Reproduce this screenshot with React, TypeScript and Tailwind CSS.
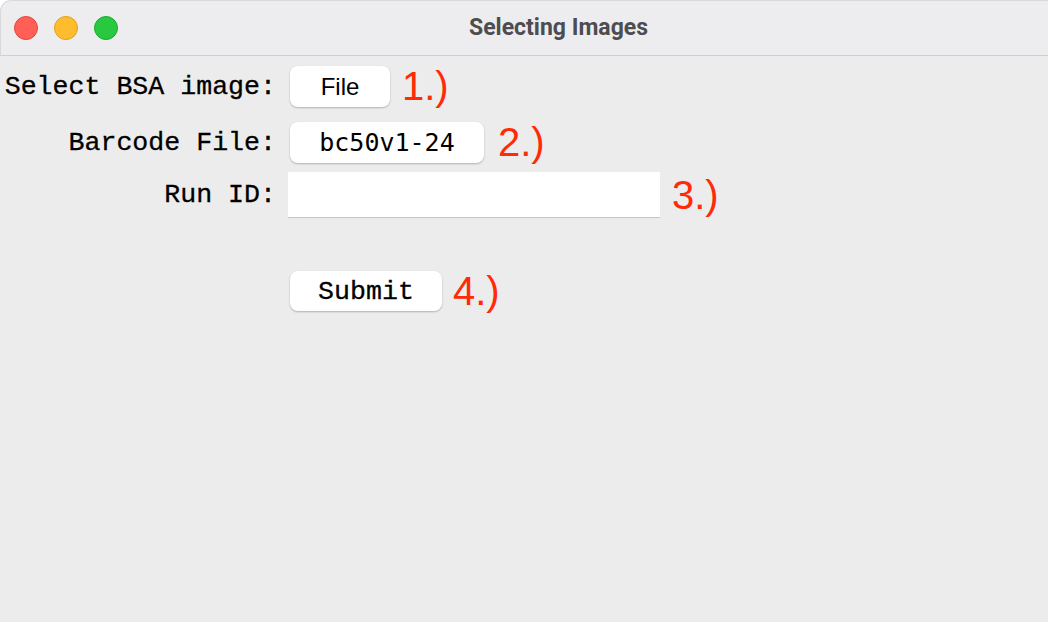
export default function App() {
  const mono = 'font-["Courier_New","Nimbus_Mono_PS","FreeMono","Liberation_Mono",monospace] [-webkit-text-stroke:0.3px_#000]'
  return (
    <div className="w-[1048px] h-[622px] bg-white overflow-hidden">
      <div className="h-full flex flex-col rounded-tl-[11px] bg-[#ececec] overflow-hidden">
        {/* title bar */}
        <div className="h-[56px] shrink-0 flex items-center rounded-tl-[11px] bg-[#edecef] border-t border-l border-[#d9d9d9] border-b-[#cfcfcf] border-b">
          <div className="flex items-center gap-[16px] pl-[13px]">
            <span className="w-[24px] h-[24px] rounded-full bg-[#ff5f57] border border-[#e2463f]" />
            <span className="w-[24px] h-[24px] rounded-full bg-[#febc2e] border border-[#e1a116]" />
            <span className="w-[24px] h-[24px] rounded-full bg-[#28c840] border border-[#1aab29]" />
          </div>
          <span className='ml-[351px] text-[23px] font-bold text-[#4d4c50] font-["Roboto","Liberation_Sans",sans-serif]'>
            Selecting Images
          </span>
        </div>

        {/* form */}
        <div className="flex flex-col pt-[10px] text-[26.6px] text-black">
          <div className="h-[41px] flex items-center">
            <span className={`w-[276px] pt-[2px] text-right ${mono}`}>Select BSA image:</span>
            <button className='ml-[14px] w-[100px] h-[41px] rounded-[8px] bg-white shadow-[0_1px_2px_rgba(0,0,0,0.25)] text-[24px] text-black font-["Liberation_Sans",Arial,sans-serif]'>
              File
            </button>
            <Step n="1.)" />
          </div>

          <div className="mt-[15px] h-[41px] flex items-center">
            <span className={`w-[276px] pt-[2px] text-right ${mono}`}>Barcode File:</span>
            <button className='ml-[14px] w-[194px] h-[41px] rounded-[8px] bg-white shadow-[0_1px_2px_rgba(0,0,0,0.25)] text-[25px] text-black font-["DejaVu_Sans_Mono",monospace]'>
              bc50v1-24
            </button>
            <Step n="2.)" className="ml-[14px]" />
          </div>

          <div className="mt-[9px] h-[46px] flex items-center">
            <span className={`w-[276px] pt-[2px] text-right ${mono}`}>Run ID:</span>
            <input
              className="ml-[12px] w-[372px] h-[46px] bg-white border-b border-[#c4c4c4] outline-none px-2"
              defaultValue=""
            />
            <Step n="3.)" />
          </div>

          <div className="mt-[53px] h-[40px] flex items-center">
            <span className="w-[276px]" />
            <button className={`ml-[14px] w-[152px] h-[40px] pt-[2px] rounded-[8px] bg-white shadow-[0_1px_2px_rgba(0,0,0,0.25)] text-black ${mono}`}>
              Submit
            </button>
            <Step n="4.)" className="ml-[11px]" />
          </div>
        </div>
      </div>
    </div>
  )
}

function Step({ n, className = 'ml-[12px]' }: { n: string; className?: string }) {
  return (
    <span className={`${className} text-[40px] leading-none text-[#ff2a06] font-["Liberation_Sans",Arial,sans-serif] -mt-[1px]`}>
      {n}
    </span>
  )
}
